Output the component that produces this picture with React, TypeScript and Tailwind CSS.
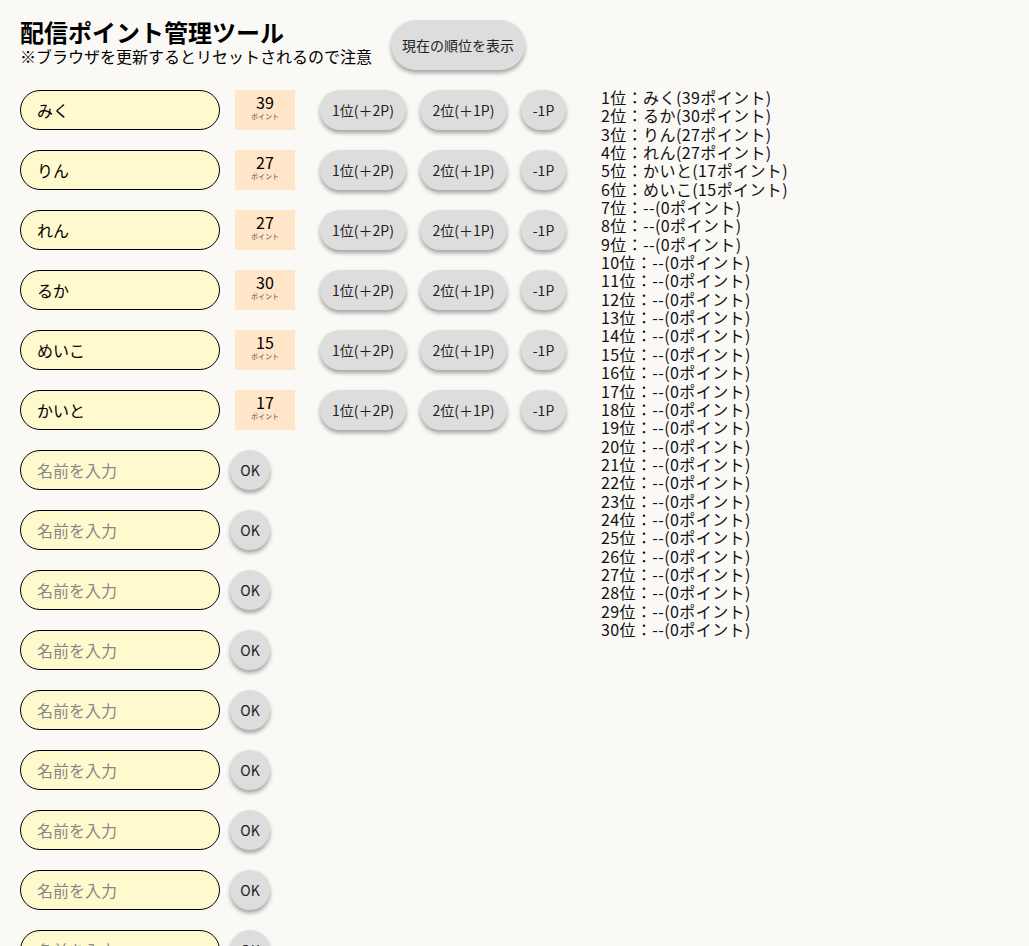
import React from "react";

const filled = [
  { name: "みく", pts: 39 },
  { name: "りん", pts: 27 },
  { name: "れん", pts: 27 },
  { name: "るか", pts: 30 },
  { name: "めいこ", pts: 15 },
  { name: "かいと", pts: 17 },
];

const ranking = [
  "1位：みく(39ポイント)",
  "2位：るか(30ポイント)",
  "3位：りん(27ポイント)",
  "4位：れん(27ポイント)",
  "5位：かいと(17ポイント)",
  "6位：めいこ(15ポイント)",
  ...Array.from({ length: 24 }, (_, i) => `${i + 7}位：--(0ポイント)`),
];

const btn =
  "h-10 rounded-full bg-[#dddddd] text-[14px] text-[#222] shadow-[0_3px_4px_rgba(0,0,0,0.35)] flex items-center justify-center shrink-0";

export default function App() {
  return (
    <div
      className="min-h-screen bg-[#fbf9f6] text-black"
      style={{ fontFamily: '"Noto Sans CJK JP", "Noto Sans", sans-serif' }}
    >
      <div className="flex items-start pl-5 pt-5">
        <div className="-mt-[2px] flex flex-col">
          <h1 className="text-[24px] font-bold leading-[28px]">配信ポイント管理ツール</h1>
          <p className="text-[16px] leading-[20px]">※ブラウザを更新するとリセットされるので注意</p>
        </div>
        <button className={btn + " ml-[19px] w-[134px] h-[50px]"}>現在の順位を表示</button>
      </div>
      <div className="flex pl-5 pt-5">
        <div className="flex w-[581px] flex-col gap-5">
          {filled.map((r) => (
            <div key={r.name} className="flex items-center">
              <input
                readOnly
                value={r.name}
                className="h-10 w-[200px] rounded-full border border-black bg-[#fffacd] pl-4 text-[16px] outline-none"
              />
              <div className="ml-[15px] flex h-10 w-[60px] flex-col items-center bg-[#ffe6c8] pt-[3px]">
                <span className="text-[16px] font-normal leading-[19px]">{r.pts}</span>
                <span className="text-[7px] leading-[9px] text-[#555]">ポイント</span>
              </div>
              <button className={btn + " ml-[25px] w-[86px]"}>1位(＋2P)</button>
              <button className={btn + " ml-[14px] w-[87px]"}>2位(＋1P)</button>
              <button className={btn + " ml-[14px] w-[45px]"}>-1P</button>
            </div>
          ))}
          {Array.from({ length: 24 }, (_, i) => (
            <div key={i} className="flex items-center">
              <input
                readOnly
                placeholder="名前を入力"
                className="h-10 w-[200px] rounded-full border border-black bg-[#fffacd] pl-4 text-[16px] outline-none placeholder:text-[#888]"
              />
              <button className={btn + " ml-[10px] w-10"}>OK</button>
            </div>
          ))}
        </div>
        <div className="-mt-[2px] text-[16px] leading-[18.35px] tracking-[0.4px] text-[#111]">
          {ranking.map((t) => (
            <div key={t}>{t}</div>
          ))}
        </div>
      </div>
    </div>
  );
}
